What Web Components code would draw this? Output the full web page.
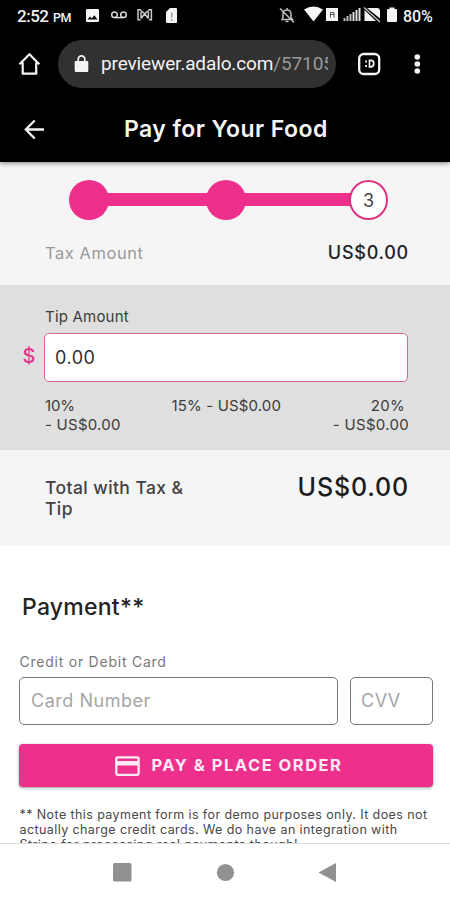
<!DOCTYPE html>
<html lang="en"><head><meta charset="utf-8"><title>Pay for Your Food</title>
<style>
body{margin:0;width:450px;height:900px;overflow:hidden;background:#fff;font-family:Inter,"Liberation Sans",sans-serif;color:#424242}
</style></head><body>
<script>
function define(name, html){
  customElements.define(name, class extends HTMLElement{
    constructor(){super();this.attachShadow({mode:'open'}).innerHTML='<style>*{box-sizing:border-box}svg{display:block;flex:none}span,div{white-space:nowrap}</style>'+html}
  });
}
define('status-bar',`<style>
:host{display:flex;height:32px;background:#000;color:#f2f2f2;font-family:Roboto,sans-serif;font-weight:500}
.l{display:flex;padding-left:17px;width:278px;height:32px;line-height:33px}
.t{font-size:17px;letter-spacing:-.5px;width:36px}.p{font-size:12.500px;letter-spacing:-.5px;width:32px;padding-top:1px}
.b{font-size:16px;letter-spacing:-.1px;line-height:33px;padding-left:4px}
</style><div class="l"><span class="t">2:52</span><span class="p">PM</span>
<svg width="100" height="32" viewBox="85 0 100 32"><path fill="#f5f5f5" fill-rule="evenodd" d="M87 9h11q1 0 1 1v11q0 1-1 1H87q-1 0-1-1V10q0-1 1-1zM87.500 19.500h10l-3.200-4.300-2.500 3.200-1.800-2z"/>
<g fill="none" stroke="#d8d8d8" stroke-width="1.500"><circle cx="114.500" cy="14.800" r="2.800"/><circle cx="123.500" cy="14.800" r="2.800"/><path d="M114.500 17.600h9"/></g>
<g fill="none" stroke="#c8c8c8" stroke-width="1.500"><path d="M140.500 19.800H138V9.800h2l4.700 4 4.700-4h2v10h-2.500M141 18.500l3.700-4.700 3.700 4.700M141 12v6.500M148.400 12v6.500"/></g>
<path fill="#f5f5f5" d="M170 8h6q1 0 1 1v13q0 1-1 1h-9q-1 0-1-1V12z"/><path d="M171.700 12.500v5M171.700 19v2" stroke="#999" stroke-width="1.500"/></svg></div>
<svg width="121" height="32" viewBox="278 0 121 32"><g fill="none" stroke="#bbb" stroke-width="1.500"><path d="M282 19.500h10.500l-1.500-2v-3.500q0-4-4-4t-4 4v3.500zM287 8v2M285.500 21.500h3M280 8.500l14 14"/></g>
<path fill="#f5f5f5" d="M304 9.500q9.500-6 19 0L313.500 21.500z"/><path fill="#f5f5f5" d="M326 8h12v13h-12z"/><path fill="none" stroke="#555" d="M330.500 17.500v-5h3.500v5M330.500 14.500h3.500"/>
<path fill="#bdbdbd" d="M343.500 18h2v3h-2zM346.500 16h2v5h-2zM349.500 14h2v7h-2z"/><path fill="#ddd" d="M352.500 12h2v9h-2zM355.500 10h2v11h-2zM358.500 8h2v13h-2z"/>
<path fill="#f5f5f5" d="M367 8h10q3 0 3 3v7.500zM364.500 10l11.500 11h-11.500z"/><path d="M364 7.500l16 14.500" stroke="#ccc" stroke-width="1.200"/>
<path fill="#f5f5f5" d="M389.500 7.500h5V9h1.500q1 0 1 1v11q0 1-1 1h-8q-1 0-1-1V10q0-1 1-1h1.500z"/></svg><span class="b">80%</span>`);

define('browser-bar',`<style>
:host{display:flex;align-items:center;height:64px;background:#000;color:#f2f2f2;font:19px Roboto,sans-serif}
.home{margin-left:17px;margin-right:15px;}
.pill{display:flex;align-items:center;width:278px;height:48px;border-radius:24px;background:#313131;padding-left:16px}
.u{margin-left:12px;width:227px;overflow:hidden;line-height:28px;letter-spacing:-.13px}.u i{font-style:normal;color:#999}
</style><svg class="home" width="26" height="26" viewBox="0 0 26 26"><path d="M2.500 13.300L12.400 3.200l9.900 10.100M5.700 11.500v11.200h13.500V11.500" fill="none" stroke="#f5f5f5" stroke-width="2.200" stroke-linejoin="round"/></svg>
<div class="pill"><svg width="15" height="20" viewBox="0 0 15 20"><path fill="#f5f5f5" d="M2 7h11q1.300 0 1.300 1.300v8.400Q14.300 18 13 18H2Q.700 18 .700 16.700V8.300Q.700 7 2 7z"/><path d="M4.200 7.500V5.200a3.300 3.300 0 0 1 6.600 0v2.300" fill="none" stroke="#f5f5f5" stroke-width="1.700"/></svg><div class="u">previewer.adalo.com<i>/57105</i></div></div>
<svg width="90" height="40" viewBox="336 43 90 40"><rect x="359.200" y="53" width="20" height="20" rx="4.500" fill="none" stroke="#f5f5f5" stroke-width="2.300"/><path d="M365.200 60.500h1.800M365.200 65h1.800" stroke="#f5f5f5" stroke-width="2"/><path d="M369.500 59.300h1.300q3 0 3 3.300t-3 3.300h-1.300z" stroke="#f5f5f5" fill="none" stroke-width="1.700"/><g fill="#f5f5f5"><circle cx="417.300" cy="56" r="2.800"/><circle cx="417.300" cy="63" r="2.800"/><circle cx="417.300" cy="70" r="2.800"/></g></svg>`);

define('app-header',`<style>
:host{display:flex;align-items:center;height:66px;background:#000;color:#f5f5f5;box-shadow:0 1px 5px rgba(0,0,0,.5);position:relative;z-index:1}
svg{margin-left:24px;margin-right:79px}div{font-size:23px;font-weight:600;letter-spacing:.43px;line-height:66px}
</style><svg width="21" height="22" viewBox="0 0 21 22"><path d="M20 11.500H2M10.700 2.500L1.800 11.500l8.900 9" fill="none" stroke="#f5f5f5" stroke-width="2.300"/></svg><div><slot></slot></div>`);

define('step-track',`<style>
:host{display:flex;align-items:center;height:40px;padding-left:69px}
.d{width:40px;height:40px;border-radius:50%;background:#ee308c;flex:none}
.b{height:13px;background:#ee308c;margin:0 -2px;width:101px}.c{width:107px}
.n{width:39px;background:#fff;border:2px solid #dc3080;font-size:18px;line-height:37px;text-align:center;color:#444;height:40px}
</style><div class="d"></div><div class="b"></div><div class="d"></div><div class="b c"></div><div class="d n"><slot></slot></div>`);

define('order-row',`<style>
:host{display:flex;justify-content:space-between;padding:0 41px 0 45px}
</style><slot name="label"></slot><slot name="value"></slot>`);

define('tip-panel',`<style>
:host{display:block;height:165px;background:#dfdfdf;color:#3c3c3c;font-size:15px;padding-top:21px;box-sizing:border-box}
.lab{padding-left:45px;line-height:22px;letter-spacing:.2px;height:27px}
.row{display:flex;align-items:center}
.dol{width:44px;padding-left:22.500px;color:#e0388a;font-size:20px;font-weight:500;line-height:46px;height:49px}
.in{width:364px;height:49px;background:#fff;border:1.500px solid #d8668f;border-radius:5px;font-size:18px;letter-spacing:.5px;line-height:48px;padding-left:10px;color:#303030}
.opts{display:flex;justify-content:space-between;padding:14px 41px 0 45px;line-height:19px}
.opts div:nth-child(1){letter-spacing:.25px}.opts div:nth-child(2){letter-spacing:.15px;padding-right:1px}.opts div:nth-child(3){text-align:right;letter-spacing:.3px}
.opts b{font-weight:400;margin-right:4px}
.opts u{text-decoration:none;letter-spacing:-.1px}
</style><div class="lab">Tip Amount</div><div class="row"><div class="dol">$</div><div class="in">0.00</div></div>
<div class="opts"><div><u>10%</u><br>- US$0.00</div><div>15% - US$0.00</div><div><b>20%</b><br>- US$0.00</div></div>`);

define('text-input',`<style>
:host{display:block;height:48px;border:1.500px solid #777;border-radius:5px;box-sizing:border-box;font-size:18px;line-height:46px;color:#a6a6a6;padding-left:11px;letter-spacing:.52px}
</style><slot></slot>`);

define('pay-button',`<style>
:host{display:flex;align-items:center;height:43px;margin:19px 17px 0 19px;padding-left:96px;border-radius:4px;background:#ec308c;box-shadow:0 1px 3px rgba(0,0,0,.4);color:#fdeaf4;font-size:16.500px;font-weight:700;letter-spacing:1.500px}
div{margin-left:10.500px;margin-top:-1px}
</style><svg width="26" height="22" viewBox="0 0 26 22"><rect x="1.300" y="2.300" width="22.300" height="17.500" rx="1.500" fill="none" stroke="#fdeaf4" stroke-width="2.300"/><path d="M1 6h23v4.500H1z" fill="#fdeaf4"/></svg><div><slot></slot></div>`);

define('nav-bar',`<style>:host{display:block;height:57px;border-top:1px solid #ddd;background:#fff;box-sizing:border-box}</style>
<svg width="450" height="56" viewBox="0 844 450 56" fill="#919191"><rect x="113" y="863" width="18.500" height="18.500" rx="1.500"/><circle cx="225.500" cy="872.500" r="8.600"/><path d="M318.500 872.500L336 863v19z"/></svg>`);

define('checkout-screen',`<style>
:host{display:flex;flex-direction:column;height:900px}
.top{background:#f5f5f5;height:123px;padding-top:17.500px}
.tax{margin-top:17.500px;line-height:32px;font-size:16.500px}
.tax .a{color:#999;letter-spacing:.55px}.tax .v{font-size:18px;font-weight:500;letter-spacing:.75px;color:#222}
.tot{background:#f5f5f5;height:96px;padding-top:27px}
.tot .a{font-size:17.500px;font-weight:500;line-height:21px;letter-spacing:.42px;color:#424242}
.tot .v{font-size:25px;font-weight:500;line-height:21px;letter-spacing:.85px;color:#1c1c1c}
.pay{flex:1;min-height:0;overflow:hidden;background:#fff}
h2{font-size:23px;font-weight:500;line-height:30px;letter-spacing:.25px;margin:46px 0 0 22px;color:#242424}
.lab{font-size:14px;letter-spacing:.76px;line-height:20px;color:#777;margin:30px 0 5px 19.500px}
.row{display:flex;gap:12px;padding:0 17px 0 19px}.row :first-child{width:319px}.row :last-child{flex:1;padding-left:10px}
.note{font-size:12.500px;line-height:15px;letter-spacing:.41px;margin:20px 0 0 19.500px;color:#484848}
.note span{letter-spacing:.45px}
</style><status-bar></status-bar><browser-bar></browser-bar><app-header>Pay for Your Food</app-header>
<div class="top"><step-track>3</step-track><order-row class="tax"><span slot="label" class="a">Tax Amount</span><span slot="value" class="v">US$0.00</span></order-row></div>
<tip-panel></tip-panel>
<div class="tot"><order-row><span slot="label" class="a">Total with Tax &amp;<br>Tip</span><span slot="value" class="v">US$0.00</span></order-row></div>
<div class="pay"><h2>Payment**</h2><div class="lab">Credit or Debit Card</div><div class="row"><text-input>Card Number</text-input><text-input>CVV</text-input></div>
<pay-button>PAY &amp; PLACE ORDER</pay-button>
<div class="note">** Note this payment form is for demo purposes only. It does not<br>actually charge credit cards. We do have an integration with<br><span>Stripe for processing real payments though!</span></div></div>
<nav-bar></nav-bar>`);
</script>
<checkout-screen></checkout-screen>
</body></html>
